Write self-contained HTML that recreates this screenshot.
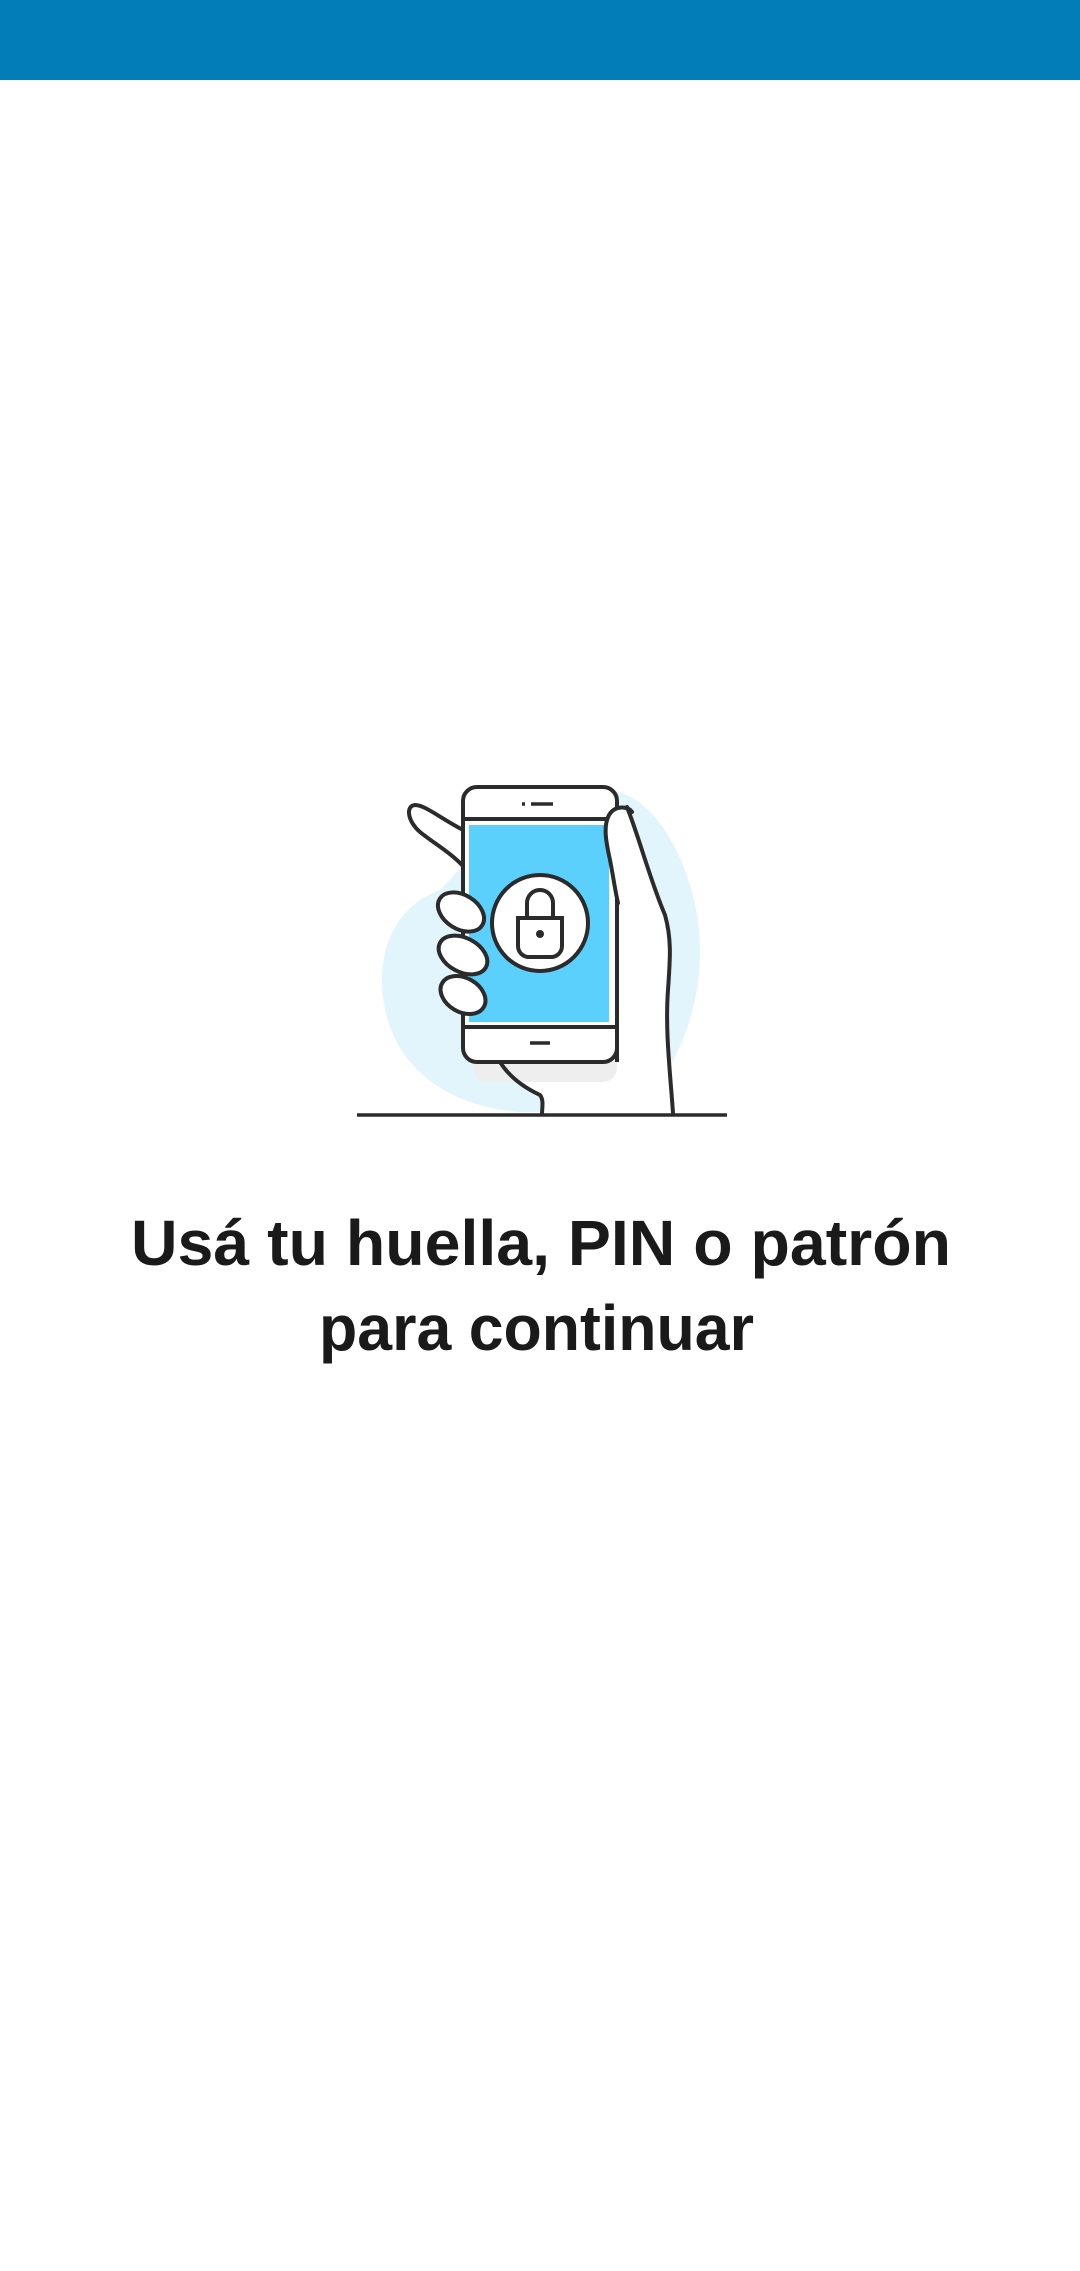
<!DOCTYPE html>
<html><head><meta charset="utf-8"><style>
html,body{margin:0;padding:0;background:#fff;width:1080px;height:2271px;overflow:hidden}
</style></head><body>
<svg width="1080" height="2271" viewBox="0 0 1080 2271" xmlns="http://www.w3.org/2000/svg" style="position:absolute;left:0;top:0">
<rect x="0" y="0" width="1080" height="80" fill="#027DB7"/>
<path d="M440 890 C470 860 520 790 600 789 C660 788 700 880 700 950 C700 1010 680 1060 640 1112 L520 1112 C430 1105 382 1050 382 980 C382 930 410 900 440 890 Z" fill="#E3F5FC"/>
<!-- hand fill -->
<path d="M617 837 L627 807 C640 840 650 880 665 915 C672 940 670 960 668 990 C665 1030 670 1070 673 1113 L542 1113 C542 1105 544 1100 540 1095 C525 1088 510 1078 500 1062 L617 1062 Z" fill="#fff"/>
<rect x="473" y="1010" width="144" height="72" rx="14" fill="#EEEEEE"/>
<g fill="none" stroke="#2b2b2b" stroke-width="4" stroke-linecap="round" stroke-linejoin="round">
<path d="M500 1062 C510 1078 525 1088 540 1095 C544 1100 542 1108 542 1114"/>
<path d="M627 807 C640 840 650 880 665 915 C672 940 670 960 668 990 C665 1030 670 1070 673 1113"/>
</g>
<rect x="463" y="787" width="154" height="275" rx="14" fill="#fff" stroke="#2b2b2b" stroke-width="4"/>
<rect x="469" y="825" width="140" height="197" fill="#5BD0FD"/>
<line x1="463" y1="819" x2="617" y2="819" stroke="#2b2b2b" stroke-width="4"/>
<line x1="463" y1="1027" x2="617" y2="1027" stroke="#2b2b2b" stroke-width="4"/>
<line x1="522" y1="804" x2="525" y2="804" stroke="#2b2b2b" stroke-width="3.5"/>
<line x1="531" y1="804" x2="553" y2="804" stroke="#2b2b2b" stroke-width="3.5"/>
<line x1="530" y1="1043" x2="550" y2="1043" stroke="#2b2b2b" stroke-width="3.5"/>
<!-- thumb over phone edge -->
<path d="M627 807 C612 806 603 822 607 842 C611 862 614 882 618 903 L622 903 L624 807 Z" fill="#fff"/>
<path d="M632 812 C628 806 615 805 609 815 C603 826 606 842 610 860 C613 875 615 890 618 903" fill="none" stroke="#2b2b2b" stroke-width="4" stroke-linecap="round"/>
<line x1="617" y1="903" x2="617" y2="1062" stroke="#2b2b2b" stroke-width="4"/>
<!-- lock -->
<circle cx="540" cy="923" r="48" fill="#fff" stroke="#2b2b2b" stroke-width="4"/>
<path d="M527 918 V903 A13 13 0 0 1 553 903 V918" fill="none" stroke="#2b2b2b" stroke-width="4"/>
<path d="M518 918 H562 V946 A11 11 0 0 1 551 957 H529 A11 11 0 0 1 518 946 Z" fill="none" stroke="#2b2b2b" stroke-width="4"/>
<circle cx="540" cy="934" r="4" fill="#2b2b2b"/>
<g fill="#fff" stroke="#2b2b2b" stroke-width="4">
<path d="M463 830 C440 818 425 805 415 805 C405 806 408 822 420 832 C432 842 450 852 463 866 Z"/>
<ellipse cx="461" cy="912" rx="25" ry="17" transform="rotate(32 461 912)"/>
<ellipse cx="463" cy="955" rx="26" ry="17" transform="rotate(28 463 955)"/>
<ellipse cx="463" cy="995" rx="24" ry="17" transform="rotate(30 463 995)"/>
</g>
<line x1="357" y1="1115" x2="727" y2="1115" stroke="#2b2b2b" stroke-width="3.5"/>
<g font-family="Liberation Sans, sans-serif" font-weight="700" font-size="64" fill="#1a1a1a">
<text x="131" y="1265" textLength="820" lengthAdjust="spacingAndGlyphs">Usá tu huella, PIN o patrón</text>
<text x="319" y="1350" textLength="435" lengthAdjust="spacingAndGlyphs">para continuar</text>
</g>
</svg>
</body></html>
